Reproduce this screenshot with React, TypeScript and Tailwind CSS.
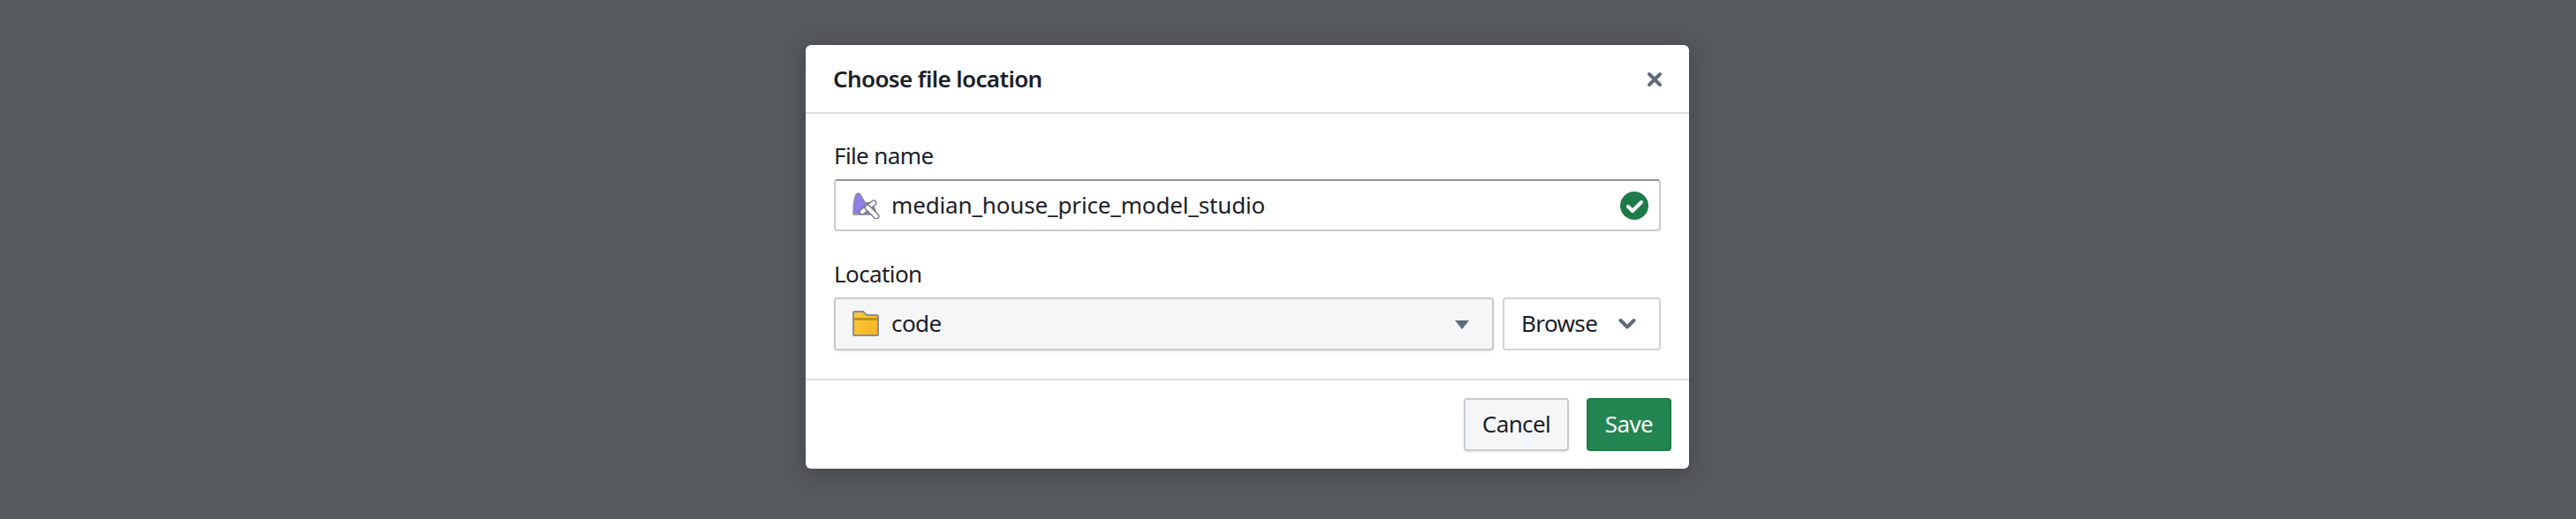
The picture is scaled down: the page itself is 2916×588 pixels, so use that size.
import React from "react";

const font = { fontFamily: '"Noto Sans", sans-serif' };

function ModelIcon() {
  return (
    <svg width="32" height="30" viewBox="0 0 32 30" className="shrink-0">
      <path d="M2 25 C2 15 3 1 7.5 1 C11 1 12 8 15 11 C17 13 19 11 21 12 C24 14 27 20 28 25 Z" fill="#8f7ee7" stroke="#8a8d99" strokeWidth="1.5" strokeLinejoin="round" />
      <path d="M12 22 L25 12" stroke="#6b7084" strokeWidth="7" strokeLinecap="round" />
      <path d="M12 22 L25 12" stroke="#fff" strokeWidth="4.5" strokeLinecap="round" />
      <path d="M18 17 L28 27" stroke="#6b7084" strokeWidth="7" strokeLinecap="round" />
      <path d="M18 17 L28 27" stroke="#fff" strokeWidth="4.5" strokeLinecap="round" />
    </svg>
  );
}

function FolderIcon() {
  return (
    <svg width="32" height="30" viewBox="0 0 32 30" className="shrink-0">
      <defs>
        <linearGradient id="fold" x1="0" y1="0" x2="1" y2="1">
          <stop offset="0" stopColor="#ffcb3d" />
          <stop offset="1" stopColor="#f2b41f" />
        </linearGradient>
      </defs>
      <path d="M2 2.5 Q2 1 3.5 1 L13 1 L17 5 L29 5 Q30 5 30 6.5 L30 27 Q30 28 29 28 L3 28 Q2 28 2 27 Z" fill="url(#fold)" stroke="#8a8d99" strokeWidth="2" />
      <rect x="3" y="8" width="26" height="3" fill="#c08f14" />
    </svg>
  );
}

export default function App() {
  return (
    <div className="w-full h-[588px] bg-[#565a5d] flex pl-[912px] pt-[51px] overflow-hidden" style={font}>
      <div className="w-[1000px] h-[480px] bg-white rounded-[6px] shadow-[0_4px_24px_rgba(0,0,0,0.25)] flex flex-col text-[#1c2127]">
        <div className="h-[78px] shrink-0 border-b-2 border-[#dcdde0] flex items-center justify-between pl-[31px] pr-[30px]">
          <span className="text-[26px] font-semibold tracking-[-0.6px]">Choose file location</span>
          <svg width="18" height="18" viewBox="0 0 18 18" className="mt-[2px]">
            <path d="M3 3 L15 15 M15 3 L3 15" stroke="#5f6b7c" strokeWidth="4" strokeLinecap="round" />
          </svg>
        </div>
        <div className="flex-1 pl-[32px] pr-[32px] pt-[29px] flex flex-col">
          <div className="h-[37px] text-[26px] leading-[36px] tracking-[-0.6px]">File name</div>
          <div className="mt-[8px] h-[59px] border-2 border-[#c9cacc] border-t-[#929497] rounded-[4px] flex items-center pl-[18px] pr-[12px]">
            <ModelIcon />
            <span className="ml-[13px] text-[26px] tracking-[-0.15px] flex-1">median_house_price_model_studio</span>
            <svg width="32" height="32" viewBox="0 0 32 32">
              <circle cx="16" cy="16" r="16" fill="#1f7a4a" />
              <path d="M9 17 L14 22 L24 12" fill="none" stroke="#fff" strokeWidth="4" strokeLinecap="round" strokeLinejoin="round" />
            </svg>
          </div>
          <div className="mt-[30px] h-[37px] text-[26px] leading-[36px] tracking-[-0.6px]">Location</div>
          <div className="mt-[8px] flex gap-[10px]">
            <div className="w-[747px] h-[60px] bg-[#f5f6f8] border-2 border-[#c9cacc] rounded-[4px] flex items-center pl-[18px] pr-[26px] shadow-[0_1px_3px_rgba(0,0,0,0.12)]">
              <FolderIcon />
              <span className="ml-[13px] mb-[2px] text-[26px] tracking-[-0.6px] flex-1">code</span>
              <svg width="16" height="10" viewBox="0 0 16 10" className="mt-[2px]">
                <path d="M0 0 H16 L8 10 Z" fill="#5f6b7c" />
              </svg>
            </div>
            <div className="w-[179px] h-[60px] border-2 border-[#d3d4d6] rounded-[4px] flex items-center justify-between pl-[19px] pr-[26px]">
              <span className="mb-[2px] text-[26px] tracking-[-0.6px]">Browse</span>
              <svg width="20" height="14" viewBox="0 0 20 14">
                <path d="M2.5 3 L10 10.5 L17.5 3" fill="none" stroke="#5f6b7c" strokeWidth="4" strokeLinecap="round" strokeLinejoin="round" />
              </svg>
            </div>
          </div>
        </div>
        <div className="h-[102px] shrink-0 border-t-2 border-[#dcdde0] flex items-start justify-end gap-[20px] pt-[20px] pr-[20px]">
          <div className="w-[119px] h-[60px] bg-[#f5f6f8] border-2 border-[#c9cacc] rounded-[4px] flex items-center justify-center pb-[2px] text-[26px] tracking-[-0.6px] shadow-[0_1px_3px_rgba(0,0,0,0.12)]">Cancel</div>
          <div className="w-[96px] h-[60px] bg-[#238551] border-2 border-[#1f7a4a] rounded-[4px] flex items-center justify-center pb-[2px] text-[26px] tracking-[-0.6px] text-white">Save</div>
        </div>
      </div>
    </div>
  );
}
